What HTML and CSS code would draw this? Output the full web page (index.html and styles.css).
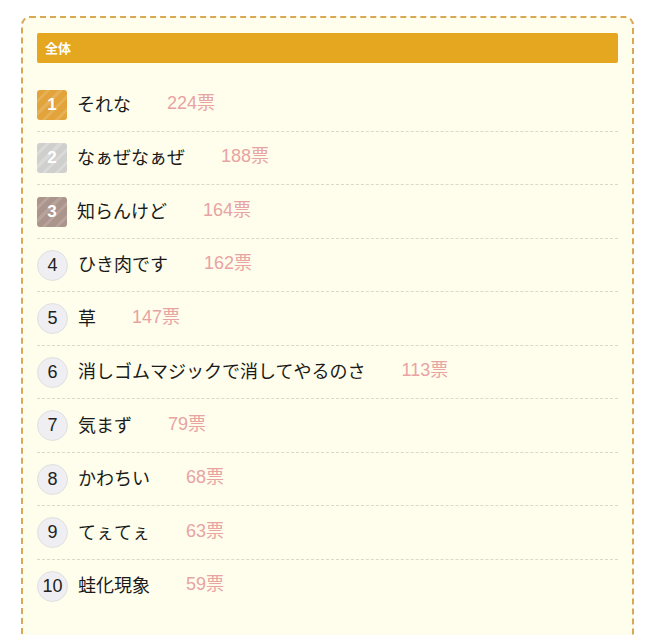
FILE: index.html
```html
<!DOCTYPE html>
<html lang="ja">
<head>
<meta charset="utf-8">
<link rel="stylesheet" href="styles.css">
</head>
<body>
<div class="card">
  <div class="head">全体</div>
  <ol class="rank-list">
    <li class="row"><span class="badge b1">1</span><span class="name">それな</span><span class="votes">224票</span></li>
    <li class="row"><span class="badge b2">2</span><span class="name">なぁぜなぁぜ</span><span class="votes">188票</span></li>
    <li class="row"><span class="badge b3">3</span><span class="name">知らんけど</span><span class="votes">164票</span></li>
    <li class="row"><span class="badge circ">4</span><span class="name">ひき肉です</span><span class="votes">162票</span></li>
    <li class="row"><span class="badge circ">5</span><span class="name">草</span><span class="votes">147票</span></li>
    <li class="row"><span class="badge circ">6</span><span class="name">消しゴムマジックで消してやるのさ</span><span class="votes">113票</span></li>
    <li class="row"><span class="badge circ">7</span><span class="name">気まず</span><span class="votes">79票</span></li>
    <li class="row"><span class="badge circ">8</span><span class="name">かわちい</span><span class="votes">68票</span></li>
    <li class="row"><span class="badge circ">9</span><span class="name">てぇてぇ</span><span class="votes">63票</span></li>
    <li class="row last"><span class="badge circ">10</span><span class="name">蛙化現象</span><span class="votes">59票</span></li>
  </ol>
</div>
</body>
</html>
```

FILE: styles.css
```css
html, body {
  margin: 0;
  padding: 0;
  background: #ffffff;
}
body {
  font-family: "Noto Sans CJK JP", "Noto Sans", sans-serif;
  overflow: hidden;
  height: 635px;
}
.card {
  margin: 16px 25px 0 21px;
  border: 2px dashed #d8a856;
  border-bottom: none;
  border-radius: 9px 9px 0 0;
  background: #fffeec;
  padding: 15px 14px 40px 14px;
  min-height: 640px;
  box-sizing: border-box;
}
.head {
  height: 30px;
  background: #e5a620;
  border-radius: 2px;
  color: #fff;
  font-weight: bold;
  font-size: 13px;
  line-height: 30px;
  padding-left: 8px;
}
.rank-list {
  list-style: none;
  margin: 15px 0 0 0;
  padding: 0;
}
.row {
  display: flex;
  align-items: center;
  height: 31px;
  padding: 11px 0 10.5px 0;
  border-bottom: 1px dashed #dcd8c8;
}
.row.last {
  border-bottom: none;
}
.badge {
  flex: none;
  width: 30px;
  height: 30px;
  display: flex;
  align-items: center;
  justify-content: center;
  font-family: "Liberation Sans", Arial, sans-serif;
  font-size: 17px;
  border-radius: 3px;
  color: #fff;
  font-weight: bold;
}
.b1 {
  background: #e2a33a repeating-linear-gradient(-45deg, rgba(255,255,255,0) 0 6px, rgba(255,255,255,0.14) 6px 9px);
}
.b2 {
  background: #cfcfcd repeating-linear-gradient(-45deg, rgba(255,255,255,0) 0 6px, rgba(255,255,255,0.22) 6px 9px);
}
.b3 {
  background: #ab948b repeating-linear-gradient(-45deg, rgba(255,255,255,0) 0 6px, rgba(255,255,255,0.14) 6px 9px);
}
.circ {
  width: 29px;
  height: 29px;
  border-radius: 50%;
  background: #eeeef3;
  border: 1px solid #e0e0e0;
  color: #222;
  font-weight: normal;
  font-size: 18px;
}
.name {
  margin-left: 10px;
  font-size: 18px;
  line-height: 1;
  color: #1a1a1a;
  position: relative;
  top: -2px;
}
.votes {
  margin-left: 36px;
  font-family: "Liberation Sans", "Noto Sans CJK JP", sans-serif;
  font-size: 18px;
  line-height: 1;
  color: #e8a3a3;
  position: relative;
  top: -2px;
}
```
